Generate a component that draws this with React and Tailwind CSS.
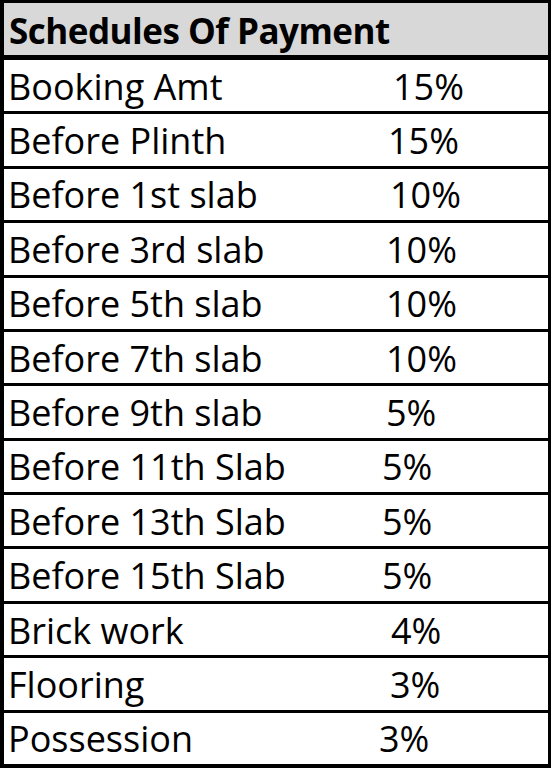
export default function App() {
  const rows = [
    ["Booking Amt", "15%", "pl-[19px]"],
    ["Before Plinth", "15%", "pl-[14px]"],
    ["Before 1st slab", "10%", "pl-[16px]"],
    ["Before 3rd slab", "10%", "pl-[12px]"],
    ["Before 5th slab", "10%", "pl-[12px]"],
    ["Before 7th slab", "10%", "pl-[12px]"],
    ["Before 9th slab", "5%", "pl-[12px]"],
    ["Before 11th Slab", "5%", "pl-[8px]"],
    ["Before 13th Slab", "5%", "pl-[8px]"],
    ["Before 15th Slab", "5%", "pl-[8px]"],
    ["Brick work", "4%", "pl-[17px]"],
    ["Flooring", "3%", "pl-[16px]"],
    ["Possession", "3%", "pl-[5px]"],
  ];
  return (
    <div
      className="w-[554px] h-[768px] bg-white text-black"
      style={{ fontFamily: '"Open Sans", "Liberation Sans", sans-serif' }}
    >
      <div className="w-[551px] h-[768px] bg-black pt-[3px] pl-[4px] pr-[3px] pb-[4px] flex flex-col">
        <div className="h-[52px] bg-[#d8d8d8] flex items-center pl-[5px] text-[35px] font-bold leading-none tracking-[-0.5px] pt-[2px]">
          Schedules Of Payment
        </div>
        <div className="flex-1 mt-[5px] grid grid-rows-[repeat(13,minmax(0,1fr))] gap-[3px]">
          {rows.map(([label, pct, pad]) => (
            <div key={label} className="bg-white flex items-center text-[36px] leading-none pl-[4px] pt-[2px]">
              <span className="w-[366px] shrink-0 tracking-[0px]">{label}</span>
              <span className={pad}>{pct}</span>
            </div>
          ))}
        </div>
      </div>
    </div>
  );
}
